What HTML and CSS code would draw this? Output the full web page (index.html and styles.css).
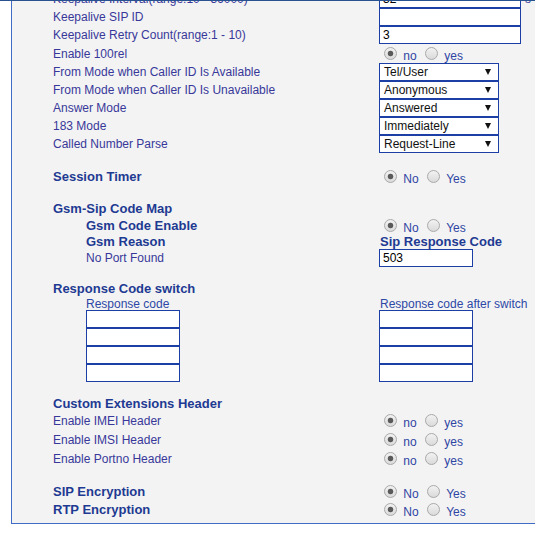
FILE: index.html
```html
<!DOCTYPE html>
<html>
<head>
<meta charset="utf-8">
<title>SIP Settings</title>
<link rel="stylesheet" href="styles.css">
</head>
<body>
<div class="topline"></div>
<div class="panel">
  <div class="row h18">
    <div class="label">Keepalive Interval(range:10 - 36000)</div>
    <div class="value inline"><input class="text w142" value="32"><span class="unit">s</span></div>
  </div>
  <div class="row h18">
    <div class="label">Keepalive SIP ID</div>
    <div class="value"><input class="text w142" value=""></div>
  </div>
  <div class="row h18">
    <div class="label">Keepalive Retry Count(range:1 - 10)</div>
    <div class="value"><input class="text w142" value="3"></div>
  </div>
  <div class="row h19">
    <div class="label">Enable 100rel</div>
    <div class="value opts"><input type="radio" class="radio" name="rel" checked> no <input type="radio" class="radio" name="rel"> yes</div>
  </div>
  <div class="row h18">
    <div class="label">From Mode when Caller ID Is Available</div>
    <div class="value"><div class="select"><span>Tel/User</span><span class="arrow"></span></div></div>
  </div>
  <div class="row h18">
    <div class="label">From Mode when Caller ID Is Unavailable</div>
    <div class="value"><div class="select"><span>Anonymous</span><span class="arrow"></span></div></div>
  </div>
  <div class="row h18">
    <div class="label">Answer Mode</div>
    <div class="value"><div class="select"><span>Answered</span><span class="arrow"></span></div></div>
  </div>
  <div class="row h18">
    <div class="label">183 Mode</div>
    <div class="value"><div class="select"><span>Immediately</span><span class="arrow"></span></div></div>
  </div>
  <div class="row h18">
    <div class="label">Called Number Parse</div>
    <div class="value"><div class="select"><span>Request-Line</span><span class="arrow"></span></div></div>
  </div>

  <div class="row h18 gap14">
    <div class="label head">Session Timer</div>
    <div class="value opts"><input type="radio" class="radio" name="st" checked> No <input type="radio" class="radio" name="st"> Yes</div>
  </div>

  <div class="row h16 gap15">
    <div class="label head">Gsm-Sip Code Map</div>
    <div class="value"></div>
  </div>
  <div class="row h17">
    <div class="label head sub">Gsm Code Enable</div>
    <div class="value opts"><input type="radio" class="radio" name="gce" checked> No <input type="radio" class="radio" name="gce"> Yes</div>
  </div>
  <div class="row h16">
    <div class="label head sub">Gsm Reason</div>
    <div class="value head nudge">Sip Response Code</div>
  </div>
  <div class="row h18">
    <div class="label sub">No Port Found</div>
    <div class="value"><input class="text w94" value="503"></div>
  </div>

  <div class="row h17 gap13">
    <div class="label head">Response Code switch</div>
    <div class="value"></div>
  </div>
  <div class="row h13">
    <div class="label sub colhead">Response code</div>
    <div class="value colhead nudge">Response code after switch</div>
  </div>
  <div class="row">
    <div class="label sub">
      <input class="text w94" value="">
      <input class="text w94" value="">
      <input class="text w94" value="">
      <input class="text w94" value="">
    </div>
    <div class="value">
      <input class="text w94" value="">
      <input class="text w94" value="">
      <input class="text w94" value="">
      <input class="text w94" value="">
    </div>
  </div>

  <div class="row h16 gap13">
    <div class="label head">Custom Extensions Header</div>
    <div class="value"></div>
  </div>
  <div class="row h19">
    <div class="label">Enable IMEI Header</div>
    <div class="value opts"><input type="radio" class="radio" name="imei" checked> no <input type="radio" class="radio" name="imei"> yes</div>
  </div>
  <div class="row h19">
    <div class="label">Enable IMSI Header</div>
    <div class="value opts"><input type="radio" class="radio" name="imsi" checked> no <input type="radio" class="radio" name="imsi"> yes</div>
  </div>
  <div class="row h18">
    <div class="label">Enable Portno Header</div>
    <div class="value opts"><input type="radio" class="radio" name="portno" checked> no <input type="radio" class="radio" name="portno"> yes</div>
  </div>

  <div class="row h18 gap15">
    <div class="label head">SIP Encryption</div>
    <div class="value opts"><input type="radio" class="radio" name="sipenc" checked> No <input type="radio" class="radio" name="sipenc"> Yes</div>
  </div>
  <div class="row h19">
    <div class="label head">RTP Encryption</div>
    <div class="value opts"><input type="radio" class="radio" name="rtpenc" checked> No <input type="radio" class="radio" name="rtpenc"> Yes</div>
  </div>
</div>
</body>
</html>
```

FILE: styles.css
```css
* {
  box-sizing: border-box;
}

html,
body {
  margin: 0;
  padding: 0;
  background: #ffffff;
  overflow: hidden;
}

body {
  width: 535px;
  height: 536px;
  font-family: "Liberation Sans", Arial, sans-serif;
  font-size: 12px;
  color: #38389a;
}

.topline {
  position: fixed;
  top: 0;
  left: 0;
  right: 0;
  height: 1px;
  background: #27518f;
  z-index: 2;
}

.panel {
  margin: -10px 0 0 11px;
  width: 620px;
  background: #f3f3f3;
  border-left: 1px solid #3f6cc4;
  border-bottom: 1px solid #3f6cc4;
  padding: 0 0 4px 41px;
}

.row {
  display: grid;
  grid-template-columns: 326px auto;
  align-items: center;
}

.h13 { height: 13px; }
.h16 { height: 16px; }
.h17 { height: 17px; }
.h18 { height: 18px; }
.h19 { height: 19px; }

.gap13 { margin-top: 13px; }
.gap14 { margin-top: 14px; }
.gap15 { margin-top: 15px; }

.label {
  white-space: nowrap;
}

.sub {
  padding-left: 33px;
}

.head {
  font-weight: bold;
  font-size: 13px;
  color: #1e3a92;
}

.colhead {
  color: #2d48a6;
}

.nudge {
  padding-left: 1px;
}

.value {
  white-space: nowrap;
}

.inline {
  display: flex;
  align-items: center;
  gap: 4px;
}

.unit {
  color: #38389a;
}

.opts {
  color: #2f45a3;
}

.text {
  display: block;
  height: 18px;
  margin: 0;
  padding: 0 3px;
  border: 1px solid #1b3fa5;
  border-radius: 0;
  background: #ffffff;
  font-family: "Liberation Sans", Arial, sans-serif;
  font-size: 12px;
  color: #000000;
  outline: none;
}

.w142 { width: 142px; }
.w94 { width: 94px; }

.select {
  width: 120px;
  height: 18px;
  border: 1px solid #1b3fa5;
  background: #ffffff;
  display: flex;
  align-items: center;
  justify-content: space-between;
  padding: 0 7px 0 4px;
  color: #111111;
}

.arrow {
  width: 0;
  height: 0;
  border-left: 3px solid transparent;
  border-right: 3px solid transparent;
  border-top: 6px solid #111111;
}

.radio {
  -webkit-appearance: none;
  appearance: none;
  width: 13px;
  height: 13px;
  margin: 3px 3px 0 5px;
  border-radius: 50%;
  border: 1px solid #a9a9a9;
  background: linear-gradient(#f2f2f2, #dadada);
  vertical-align: baseline;
}

.radio:checked {
  background: radial-gradient(circle, #5a5a5a 0, #5a5a5a 2.4px, rgba(90, 90, 90, 0) 3.2px), linear-gradient(#f2f2f2, #dadada);
}
```
